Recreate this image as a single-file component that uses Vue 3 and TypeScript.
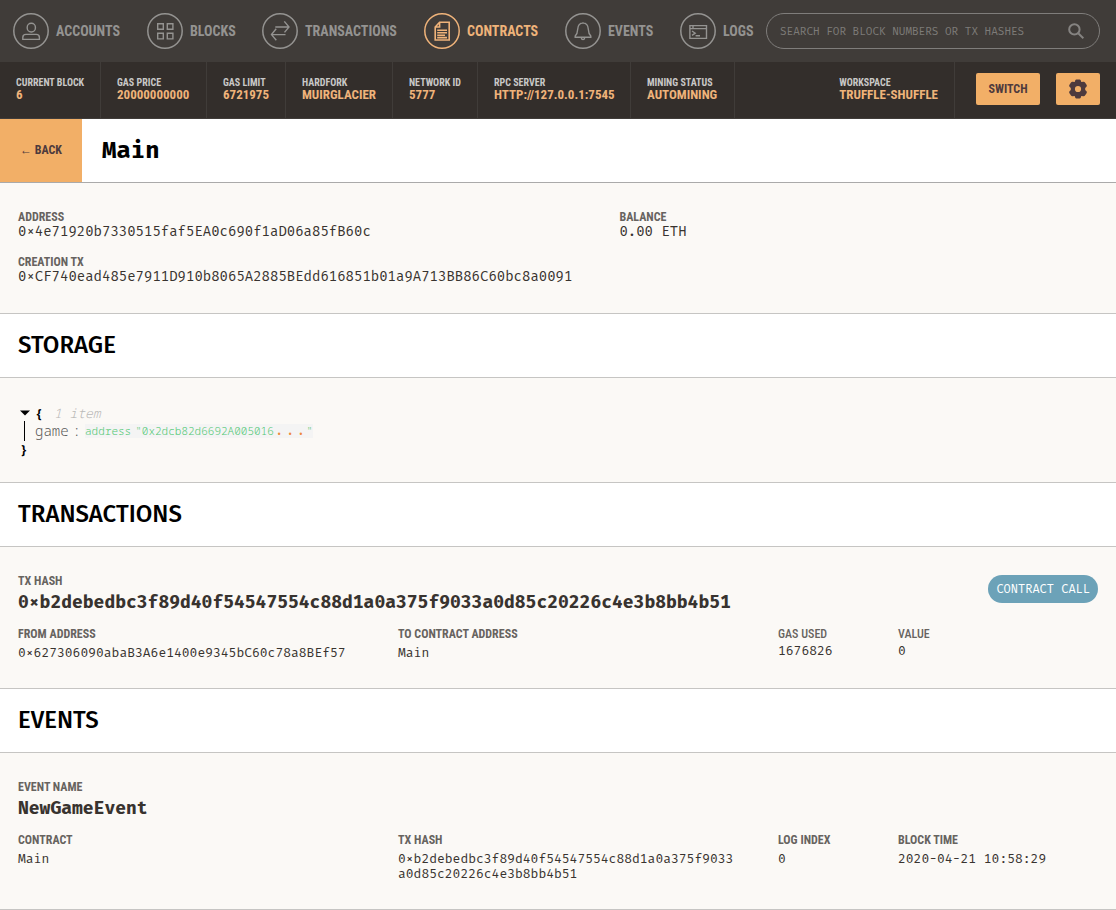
<script setup lang="ts">
interface NavItem { label: string; icon: string; active?: boolean }
interface Fact { label: string; value: string }

const nav: NavItem[] = [
  { label: 'ACCOUNTS', icon: 'user' },
  { label: 'BLOCKS', icon: 'blocks' },
  { label: 'TRANSACTIONS', icon: 'arrows' },
  { label: 'CONTRACTS', icon: 'doc', active: true },
  { label: 'EVENTS', icon: 'bell' },
  { label: 'LOGS', icon: 'term' },
]

const facts: Fact[] = [
  { label: 'CURRENT BLOCK', value: '6' },
  { label: 'GAS PRICE', value: '20000000000' },
  { label: 'GAS LIMIT', value: '6721975' },
  { label: 'HARDFORK', value: 'MUIRGLACIER' },
  { label: 'NETWORK ID', value: '5777' },
  { label: 'RPC SERVER', value: 'HTTP://127.0.0.1:7545' },
  { label: 'MINING STATUS', value: 'AUTOMINING' },
]

const txHash = '0×b2debedbc3f89d40f54547554c88d1a0a375f9033a0d85c20226c4e3b8bb4b51'
</script>

<template>
  <div class="app">
    <header>
      <div class="top">
        <nav>
          <a v-for="item in nav" :key="item.label" href="#" class="nav-item" :class="{ active: item.active }">
            <svg class="nav-icon" viewBox="0 0 36 36" fill="none" stroke="currentColor" aria-hidden="true">
              <circle cx="18" cy="18" r="17.2" stroke-width="1.5" />
              <g v-if="item.icon === 'user'" stroke-width="1.4">
                <rect x="14.2" y="10.2" width="8.2" height="8.8" rx="4" />
                <path d="M9.8 26.4V24.4Q9.8 21.4 13 21.4H23.2Q26.4 21.4 26.4 24.4V26.4Z" />
              </g>
              <g v-else-if="item.icon === 'blocks'" stroke-width="1.4">
                <path d="M10.7 10.7h5.6v5.6h-5.6zM20.3 10.7h5.6v5.6h-5.6zM10.7 20.3h5.6v5.6h-5.6zM20.3 20.3h5.6v5.6h-5.6z" />
              </g>
              <g v-else-if="item.icon === 'arrows'" stroke-width="1.4">
                <path d="M13.3 14H27M22.3 8.4L27 14L22.5 19.4M23.5 21.6H9.5M14.2 15.8L9.5 21.6L14.3 27.2" />
              </g>
              <g v-else-if="item.icon === 'doc'" stroke-width="1.6">
                <path d="M15.6 9.3H25.2V27H11.2V14ZM15.6 9.3V14H11.2" />
                <path d="M13.2 17.2h9.8M13.2 19.7h9.8M13.2 22.2h7.8M13.2 24.6h9.8" />
              </g>
              <g v-else-if="item.icon === 'bell'" stroke-width="1.4">
                <path d="M18 9.3V10M18 9.9C14.2 10.1 12.9 12.9 12.7 16.2C12.5 20 11.8 21.5 10.2 23.1V24.3H25.8V23.1C24.2 21.5 23.5 20 23.3 16.2C23.1 12.9 21.8 10.1 18 9.9ZM16.2 24.6Q16.6 26.6 18 26.6T19.8 24.6" />
              </g>
              <g v-else stroke-width="1.4">
                <path d="M9.9 12.6h16.6v12.8H9.9zM9.9 15.6h16.6M13 12.6v3M12 18l3.2 2.2-3.2 2.2M15.6 22.8h4.4" />
              </g>
            </svg>
            <span>{{ item.label }}</span>
          </a>
        </nav>
        <form class="search" role="search" @submit.prevent>
          <input type="text" aria-label="Search" placeholder="SEARCH FOR BLOCK NUMBERS OR TX HASHES">
          <svg viewBox="0 0 16 16" fill="none" stroke="currentColor" stroke-width="2" aria-hidden="true">
            <circle cx="6.4" cy="6.4" r="5.2" /><path d="M10.2 10.2l5.2 5" />
          </svg>
        </form>
      </div>
      <div class="status">
        <div class="facts">
          <div v-for="f in facts" :key="f.label" class="fact">
            <span class="fact-label">{{ f.label }}</span>
            <span class="fact-value">{{ f.value }}</span>
          </div>
        </div>
        <div class="fact workspace">
          <span class="fact-label">WORKSPACE</span>
          <span class="fact-value">TRUFFLE-SHUFFLE</span>
        </div>
        <div class="actions">
          <button type="button">SWITCH</button>
          <button type="button" class="gear" aria-label="Settings">
            <svg viewBox="0 0 20 20" aria-hidden="true">
              <path fill="currentColor" fill-rule="evenodd" d="M7.3 1.2Q7.6.4 8.4.4H11.6Q12.4.4 12.7 1.2L13.3 3.1L15.4 2.7Q16.5 2.6 17 3.4L18.7 6.1Q19.1 7 18.5 7.7L17.2 9.1V10.9L18.5 12.3Q19.1 13 18.7 13.9L17 16.6Q16.5 17.4 15.4 17.3L13.3 16.9L12.7 18.8Q12.4 19.6 11.6 19.6H8.4Q7.6 19.6 7.3 18.8L6.7 16.9L4.6 17.3Q3.5 17.4 3 16.6L1.3 13.9Q.9 13 1.5 12.3L2.8 10.9V9.1L1.5 7.7Q.9 7 1.3 6.1L3 3.4Q3.5 2.6 4.6 2.7L6.7 3.1ZM10 6.9A3.1 3.1 0 1 0 10 13.1A3.1 3.1 0 1 0 10 6.9Z" />
            </svg>
          </button>
        </div>
      </div>
    </header>

    <main>
      <div class="title-bar">
        <button type="button" class="back"><span>←</span> BACK</button>
        <h1>Main</h1>
      </div>

      <section class="body info">
        <div class="field">
          <div class="label">ADDRESS</div>
          <div class="value large">0×4e71920b7330515faf5EA0c690f1aD06a85fB60c</div>
        </div>
        <div class="field">
          <div class="label">BALANCE</div>
          <div class="value large">0.00 ETH</div>
        </div>
        <div class="field">
          <div class="label">CREATION TX</div>
          <div class="value large">0×CF740ead485e7911D910b8065A2885BEdd616851b01a9A713BB86C60bc8a0091</div>
        </div>
      </section>

      <h2>STORAGE</h2>
      <section class="body storage">
        <div class="json-open">
          <svg viewBox="0 0 10 6" aria-hidden="true"><path d="M0 .5H10L5 5.5Z" /></svg>
          <b>{</b><i>1 item</i>
        </div>
        <div class="json-row">
          <span class="key">game</span><span class="colon">:</span>
          <code><span>address</span><span>"0x2dcb82d6692A005016<em>...</em>"</span></code>
        </div>
        <div class="json-close"><b>}</b></div>
      </section>

      <h2>TRANSACTIONS</h2>
      <section class="body card">
        <div class="card-head">
          <div class="field">
            <div class="label">TX HASH</div>
            <div class="headline">{{ txHash }}</div>
          </div>
          <span class="badge">CONTRACT CALL</span>
        </div>
        <div class="row">
          <div class="field">
            <div class="label">FROM ADDRESS</div>
            <div class="value">0×627306090abaB3A6e1400e9345bC60c78a8BEf57</div>
          </div>
          <div class="field">
            <div class="label">TO CONTRACT ADDRESS</div>
            <div class="value">Main</div>
          </div>
          <div class="field compact">
            <div class="label">GAS USED</div>
            <div class="value">1676826</div>
          </div>
          <div class="field compact">
            <div class="label">VALUE</div>
            <div class="value">0</div>
          </div>
        </div>
      </section>

      <h2>EVENTS</h2>
      <section class="body card">
        <div class="card-head">
          <div class="field">
            <div class="label">EVENT NAME</div>
            <div class="headline">NewGameEvent</div>
          </div>
        </div>
        <div class="row">
          <div class="field">
            <div class="label">CONTRACT</div>
            <div class="value">Main</div>
          </div>
          <div class="field">
            <div class="label">TX HASH</div>
            <div class="value">{{ txHash }}</div>
          </div>
          <div class="field">
            <div class="label">LOG INDEX</div>
            <div class="value">0</div>
          </div>
          <div class="field">
            <div class="label">BLOCK TIME</div>
            <div class="value">2020-04-21 10:58:29</div>
          </div>
        </div>
      </section>
    </main>
  </div>
</template>

<style>
body { margin: 0; background: #fbf9f6; }
</style>

<style scoped>
* { box-sizing: border-box; }
.app {
  --sans: "Roboto Condensed", Roboto, sans-serif;
  --mono: "Fira Mono", "DejaVu Sans Mono", monospace;
  font-family: var(--sans);
  color: #38332f;
}
header { background: #403c39; }
.top { display: flex; height: 62px; padding: 0 16px 0 13px; align-items: center; }
nav { display: grid; grid-template-columns: 134px 115px 162px 141px 115px 86px; flex: none; }
.nav-item {
  display: flex; align-items: center; gap: 7px;
  color: #949391; text-decoration: none; font-size: 14px; font-weight: 700; white-space: nowrap;
}
.nav-item.active { color: #efb37a; }
.nav-icon { width: 36px; height: 36px; flex: none; }
.search {
  display: flex; align-items: center; flex: 1; min-width: 0; height: 36px; padding: 0 15px 0 13px;
  border: 1px solid #7f7d7b; border-radius: 18px; color: #858381;
}
.search input {
  flex: 1; min-width: 0; padding: 0; border: 0; outline: 0; background: none;
  font-family: var(--mono); font-size: 11px; color: #efb37a;
}
.search input::placeholder { color: #7d7b78; opacity: 1; }
.search svg { width: 16px; height: 16px; flex: none; }
.status { display: flex; height: 57px; background: #332e2b; border-bottom: 1px solid #403c39; }
.facts { display: grid; grid-template-columns: 101px 106px 79px 107px 85px 153px 104px; flex: none; }
.fact {
  display: flex; flex-direction: column; justify-content: center; padding: 0 0 3px 16px;
  border-right: 1px solid #403c39; white-space: nowrap;
}
.fact-label { font-size: 10px; line-height: 12px; font-weight: 700; color: #c9c8c7; }
.fact-value { font-size: 13px; line-height: 12px; font-weight: 700; color: #efb37a; }
.workspace { margin-left: auto; padding-right: 16px; }
.actions { display: flex; align-items: center; gap: 16px; padding: 0 16px 2px 21px; }
.actions button {
  width: 64px; height: 32px; padding: 0; border: 0; border-radius: 2px;
  background: #f2af67; color: #4e3a3d; font-family: var(--sans); font-size: 12px; font-weight: 700;
}
.actions .gear { width: 44px; display: grid; place-items: center; }
.gear svg { width: 20px; height: 20px; }

.title-bar { display: flex; height: 64px; background: #fff; border-bottom: 1px solid #aaa; }
.back {
  width: 82px; border: 0; padding: 0 0 1px; background: #f2af67; color: #4e3a3d;
  font-family: var(--sans); font-size: 12px; font-weight: 700;
}
h1 { margin: 0 0 0 20px; font-family: var(--mono); font-size: 24px; line-height: 62px; font-weight: 700; color: #000; }
h2 {
  margin: 0; padding: 0 18px; background: #fff; border-bottom: 1px solid #c6c5c3; color: #000;
  font-family: "Fira Sans", "Noto Sans", sans-serif; font-size: 24px; line-height: 63px; font-weight: 500;
}
.body { border-bottom: 1px solid #c6c5c3; }
.label { font-size: 12px; line-height: 14px; font-weight: 700; color: #67635f; white-space: nowrap; }
.value { font-family: var(--mono); font-size: 13px; line-height: 15px; margin-top: 4px; word-break: break-all; }
.value.large { font-size: 14px; margin-top: 0; white-space: nowrap; }
.info { display: grid; grid-template-columns: max-content 1fr; gap: 16px 47px; padding: 27px 18px 29px; }
.storage {
  font-family: "Noto Sans Mono", "DejaVu Sans Mono", monospace; font-size: 13px; line-height: 16px; font-weight: 300;
  padding: 27px 20px 25px;
}
.card { padding: 27px 18px 28px; }
.card-head { display: flex; justify-content: space-between; align-items: flex-start; }
.headline { margin-top: 5px; font-family: var(--mono); font-size: 18px; line-height: 18px; font-weight: 700; }
.badge {
  margin-top: 1px; padding: 0 8px; border-radius: 14px; background: #6ca2b8; color: #fff;
  font-family: var(--mono); font-size: 12px; line-height: 28px; white-space: nowrap;
}
.row { display: grid; grid-template-columns: 340px 340px 80px 1fr; gap: 40px; margin-top: 16px; }
.compact .label { font-weight: 500; }
.compact .value { margin-top: 2px; }
.json-open { display: flex; align-items: center; }
.json-open svg { width: 10px; height: 6px; margin-right: 5px; }
.json-open i { margin-left: 11px; color: #b9b8b6; }
.json-row {
  display: flex; align-items: center; height: 20px; margin-left: 4px; padding-left: 10px;
  border-left: 1px solid #000; color: #555; font-size: 14px;
}
.colon { margin: 0 4px; }
.json-row code {
  display: flex; gap: 4px; height: 14px; background: #f4f4f4; color: #4fc772;
  font-family: inherit; font-size: 11px; line-height: 14px;
}
.json-row em { color: #ee8a3c; font-size: 18px; line-height: 1px; font-style: normal; font-weight: 400; }
b { color: #000; font-weight: 700; }
</style>
